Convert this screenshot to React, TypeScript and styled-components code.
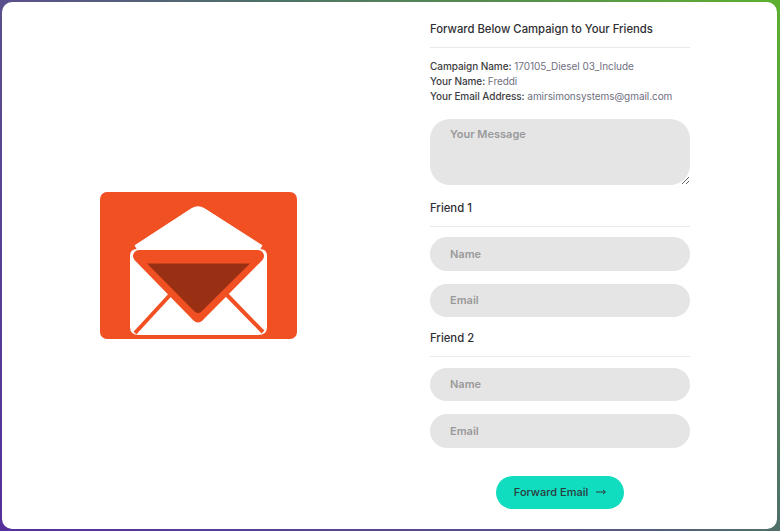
import React from 'react';
import styled, { createGlobalStyle } from 'styled-components';

const GlobalStyle = createGlobalStyle`
  html, body {
    margin: 0;
    height: 100%;
    overflow: hidden;
  }
  body {
    font-family: 'Inter', 'Open Sans', sans-serif;
  }
  * {
    box-sizing: border-box;
  }
`;

const Frame = styled.div`
  width: 780px;
  height: 531px;
  padding: 2px 3px 2px 2px;
  background: linear-gradient(45deg, #55309b 0%, #5a4f8c 40.5%, #4f6f6a 59.5%, #5db02f 100%);
`;

const Panel = styled.main`
  height: 100%;
  display: flex;
  background: #fff;
  border-radius: 10px;
`;

const Visual = styled.div`
  width: 392px;
  flex: none;
  display: flex;
  align-items: center;
  justify-content: center;
`;

const Side = styled.form`
  width: 260px;
  margin-left: 36px;
  display: flex;
  flex-direction: column;
  padding-top: 19px;
`;

const Heading = styled.h2`
  margin: 0;
  height: 27px;
  border-bottom: 1px solid #e9e9e9;
  font-size: 11.3px;
  line-height: 16px;
  font-weight: 500;
  color: #2f2f33;
  white-space: nowrap;
`;

const Info = styled.div`
  margin-top: 11px;
  font-size: 10px;
  line-height: 15px;
  color: #6f6f80;
  letter-spacing: -0.06px;
  white-space: nowrap;
`;

const InfoLabel = styled.span`
  font-weight: 500;
  color: #3d3d42;
`;

const fieldStyles = `
  display: block;
  width: 100%;
  border: 0;
  outline: 0;
  margin: 0;
  background: #e5e5e5;
  padding: 0 20px;
  font-family: inherit;
  font-size: 11px;
  font-weight: 600;
  color: #333;
  &::placeholder {
    color: #9a9a9a;
    opacity: 1;
  }
`;

const Message = styled.textarea`
  ${fieldStyles}
  height: 66px;
  margin-top: 15px;
  margin-bottom: 11px;
  padding-top: 8px;
  line-height: 14px;
  border-radius: 20px;
`;

const FieldGroup = styled.section`
  display: flex;
  flex-direction: column;
  margin-bottom: 9.3px;
`;

const GroupTitle = styled(Heading).attrs({ as: 'h3' })`
  height: 31px;
  padding-top: 4px;
  margin-bottom: 10.2px;
`;

const FieldStack = styled.div`
  display: flex;
  flex-direction: column;
  gap: 13px;
`;

const Input = styled.input`
  ${fieldStyles}
  height: 33.5px;
  border-radius: 17px;
`;

const Submit = styled.button`
  align-self: center;
  margin-top: 19px;
  height: 33px;
  width: 128px;
  display: flex;
  align-items: center;
  justify-content: center;
  gap: 8px;
  border: 0;
  border-radius: 17px;
  background: #10dcbf;
  color: #2c3a3c;
  font-family: inherit;
  font-size: 11px;
  font-weight: 500;
`;

const friends = ['Friend 1', 'Friend 2'];

function EnvelopeLogo() {
  return (
    <svg width="197" height="147" viewBox="0 0 197 147">
      <rect width="197" height="147" rx="7" fill="#f15023" />
      <path
        d="M35 53.5 L91 17 Q98 12.5 105 17 L162 53.5 L158 60 H39 Z"
        fill="#fff"
        stroke="#fff"
        strokeLinejoin="round"
      />
      <path
        d="M37 57 H160 Q167 57 167 64 V135 Q167 143 158 143 H39 Q30 143 30 135 V64 Q30 57 37 57 Z"
        fill="#fff"
      />
      <path d="M70 103 L35 141" stroke="#f15023" strokeWidth="4" />
      <path d="M127 103 L163 140" stroke="#f15023" strokeWidth="4" />
      <path
        d="M39 64 H158 L98 124.5 Z"
        fill="#f15023"
        stroke="#f15023"
        strokeWidth="12"
        strokeLinejoin="round"
      />
      <path d="M47 71.5 H150 L101 120 Q98 122 95 120 Z" fill="#993014" />
    </svg>
  );
}

function ArrowIcon() {
  return (
    <svg width="10" height="8" viewBox="0 0 10 8">
      <path d="M0 4 H9 M7 2 L9.5 4 L7 6" fill="none" stroke="#2c3a3c" strokeWidth="1" />
    </svg>
  );
}

export default function App() {
  return (
    <Frame>
      <GlobalStyle />
      <Panel>
        <Visual>
          <EnvelopeLogo />
        </Visual>
        <Side onSubmit={(e) => e.preventDefault()}>
          <Heading>Forward Below Campaign to Your Friends</Heading>
          <Info>
            <div>
              <InfoLabel>Campaign Name:</InfoLabel> 170105_Diesel 03_Include
            </div>
            <div>
              <InfoLabel>Your Name:</InfoLabel> Freddi
            </div>
            <div>
              <InfoLabel>Your Email Address:</InfoLabel> amirsimonsystems@gmail.com
            </div>
          </Info>
          <Message placeholder="Your Message" />
          {friends.map((friend) => (
            <FieldGroup key={friend}>
              <GroupTitle>{friend}</GroupTitle>
              <FieldStack>
                <Input placeholder="Name" />
                <Input placeholder="Email" />
              </FieldStack>
            </FieldGroup>
          ))}
          <Submit type="submit">
            Forward Email <ArrowIcon />
          </Submit>
        </Side>
      </Panel>
    </Frame>
  );
}
